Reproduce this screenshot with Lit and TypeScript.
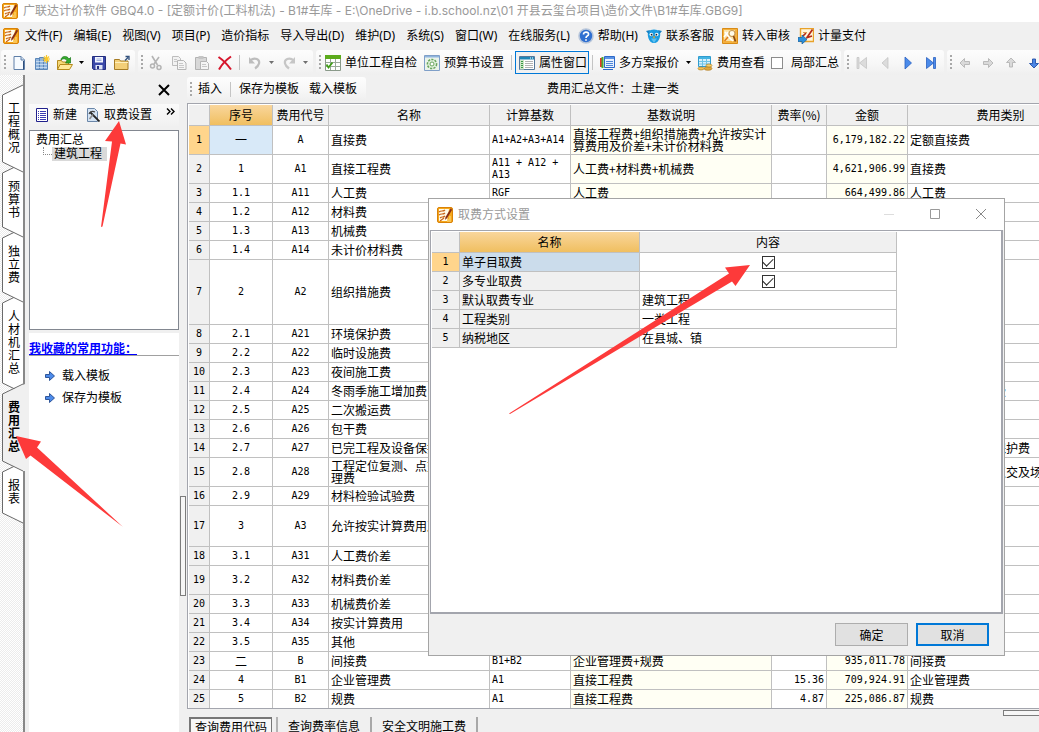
import { LitElement, html, svg, css, nothing } from "lit";
import { customElement, state } from "lit/decorators.js";
import { classMap } from "lit/directives/class-map.js";

const pic = (w: number, h: number, body: unknown) =>
  html`<svg class="ico" width=${w} height=${h} viewBox="0 0 ${w} ${h}" aria-hidden="true">${body}</svg>`;

const icons: Record<string, () => unknown> = {
  app: () => pic(16, 16, svg`
    <rect x=".5" y=".5" width="15" height="15" rx="1.5" fill="#f6a81c" stroke="#d98207"/>
    <path d="M2 2h10l-2 12H2z" fill="#fffbe8"/>
    <path d="M2 5c2-2 4 0 6-2M2 8c2-2 4 0 6-2M3 11c2-2 3 0 5-2M3 14l4-3" stroke="#c8641a" stroke-width="1.2" fill="none"/>
    <path d="M14 1 8.5 10 8 13l2.200-2L15 3z" fill="#8a2f14"/><path d="M11 12v3M13 9v6" stroke="#ffe08a"/>`),
  file: () => pic(16, 16, svg`
    <path d="M3 1.500h7l3.500 3.500v9.500H3z" fill="#f7fbff" stroke="#5f7fa8"/>
    <path d="M10 1.500V5h3.500" fill="#cfdff0" stroke="#5f7fa8"/><path d="M12.500 6v8.500" stroke="#2f4f7c"/>`),
  book: () => pic(16, 16, svg`
    <path d="M1.500 3.500h4v11h-4zM5.500 2.500h4v12h-4zM9.500 3.500h4v11h-4z" fill="#8fb4dd" stroke="#5b86b8"/>
    <path d="M2 6.500h11M2 9.500h11M2 12.500h11" stroke="#e8f1fa" stroke-width=".6"/>
    <path d="M12.500 0v8M8.500 4h8M10 1.500l5 5M15 1.500l-5 5" stroke="#f9c828" stroke-width="1.200"/>`),
  open: () => pic(16, 16, svg`
    <path d="M.5 14.500v-9h4l1 1.500h6v7.500z" fill="#f5d878" stroke="#b58a1d"/>
    <path d="M.5 14.500 3 9.500h12.500l-3 5z" fill="#ffe99a" stroke="#b58a1d"/>
    <path d="M4 5c0-4 6-5 8-1l1.500-1.500V8H8.500L10 6C9 3.500 6.500 3 4 5z" fill="#35ad2e" stroke="#187518" stroke-width=".7"/>`),
  save: () => pic(16, 16, svg`
    <path d="M1.500 1.500h13v13h-12l-1-1z" fill="#3a48a8" stroke="#242f80"/>
    <path d="M4 2h8v5.500H4z" fill="#f4f6ff"/><path d="M4.500 10h7v4.500h-7z" fill="#dfe4f5"/><path d="M6 11h2v3H6z" fill="#242f80"/>
    <path d="M5.500 4h5M5.500 5.500h5" stroke="#9fb0dd"/>`),
  folder: () => pic(16, 16, svg`
    <path d="M.5 14.500V4.500h5l1 1.500h7.500v8.500z" fill="#f3cf78" stroke="#a67c25"/>
    <path d="M1 7.500h13" stroke="#fff0bd"/><path d="M11 5.500 14 2.500M11.500 1.500h3.500v3.500" stroke="#31507c" stroke-width="1.300" fill="none"/>`),
  cut: () => pic(16, 16, svg`
    <path d="M4 1l5.500 9M11 2 6 9" stroke="#b4b4b4" stroke-width="1.600"/>
    <circle cx="4.500" cy="11" r="2" fill="none" stroke="#b4b4b4" stroke-width="1.500"/><circle cx="11" cy="12.500" r="2" fill="none" stroke="#b4b4b4" stroke-width="1.500"/>`),
  copy: () => pic(16, 16, svg`
    <path d="M1.500 1.500h6l2 2v7h-8z" fill="#f2f2f2" stroke="#bdbdbd"/>
    <path d="M6.500 5.500h6l2.500 2.500v6.500H6.500z" fill="#f5f5f5" stroke="#b5b5b5"/><path d="M8 8.500h4M8 10.500h5M8 12.500h5M3 4.500h3M3 6.500h3" stroke="#c8c8c8"/>`),
  paste: () => pic(16, 16, svg`
    <path d="M1.500 2.500h11v12h-11z" fill="#d8d8d8" stroke="#b2b2b2"/><path d="M4.500 1h5v3h-5z" fill="#c4c4c4"/>
    <path d="M6.500 6.500h6l2 2v6h-8z" fill="#f5f5f5" stroke="#b5b5b5"/><path d="M8 9.500h4M8 11.500h5" stroke="#c8c8c8"/>`),
  del: () => pic(16, 16, svg`<path d="M1.500 2C6 5 10 9 14 14.500M14 1.500C9 5 5 9 2 14.500" stroke="#d6152c" stroke-width="2" fill="none"/>`),
  undo: () => pic(16, 16, svg`<path d="M3 5.500c5-4 10-1 9 3-.4 2-2 3.500-4 5" stroke="#bdbdbd" stroke-width="2.200" fill="none"/><path d="M2 2v6.500h6z" fill="#bdbdbd"/>`),
  redo: () => pic(16, 16, svg`<path d="M13 5.500c-5-4-10-1-9 3 .4 2 2 3.500 4 5" stroke="#c6c6c6" stroke-width="2.200" fill="none"/><path d="M14 2v6.500H8z" fill="#c6c6c6"/>`),
  check: () => pic(16, 16, svg`
    <path d="M.5.500h15v15H.5z" fill="#fff" stroke="#8a9a8a"/><path d="M0 0h16v4H0z" fill="#5cab1c"/>
    <path d="M1 7.500h14M1 11.500h14M5.500 4v11M10.500 4v11" stroke="#9aa89a"/><path d="M1.500 9.500l2 3 4-5" stroke="#3f9d16" stroke-width="1.800" fill="none"/>`),
  gear: () => pic(16, 16, svg`
    <path d="M.5.500h15v15H.5z" fill="#eaf3ea" stroke="#7f9fc8"/><path d="M1 1h14v1.500H1z" fill="#90b4de"/>
    <circle cx="8" cy="9" r="4.600" fill="#dff0da" stroke="#68a55c" stroke-width="1.500" stroke-dasharray="2.200 1.200"/><circle cx="8" cy="9" r="2" fill="#fff" stroke="#68a55c"/>`),
  props: () => pic(16, 16, svg`
    <path d="M.5 1.500h15v13H.5z" fill="#fff" stroke="#56789a"/><path d="M1 2h14v2.500H1z" fill="#1e86b8"/><path d="M11 3h1m1 0h1" stroke="#fff"/>
    <path d="M1 5h4v9.500H1z" fill="#cfe6c8"/><path d="M2 6.500h2M2 8.500h2M2 10.500h2M2 12.500h2" stroke="#3c9a48"/>
    <path d="M6 6.500h8M6 8.500h8M6 10.500h8M6 12.500h8" stroke="#b3b3b3"/>`),
  multi: () => pic(16, 16, svg`
    <path d="M1 3h2v9H1z" fill="#e03a28"/><path d="M2.500 2h2v11h-2z" fill="#49a934"/>
    <path d="M5.500 1.500h10v11h-10z" fill="#e8f1ff" stroke="#2d69c9"/><path d="M4 14.500h10" stroke="#2d69c9"/>
    <path d="M6 2h9v2H6z" fill="#5b93e4"/><path d="M7 6.500h7M7 8.500h7M7 10.500h7" stroke="#4f86d8"/>`),
  fee: () => pic(16, 16, svg`
    <path d="M1.500 1.500h12v10h-12z" fill="#d7f0fb" stroke="#2f9ccf"/><path d="M2 2h11v2H2z" fill="#45b4e2"/><path d="M2 6.500h11M2 9h11M5.500 4v7M9.500 4v7" stroke="#6fc3e6" fill="none"/>
    <ellipse cx="11" cy="13.500" rx="4" ry="1.800" fill="#e0a83c" stroke="#a8741a" stroke-width=".6"/><ellipse cx="12" cy="10.500" rx="3" ry="1.500" fill="#f5cf6c" stroke="#a8741a" stroke-width=".6"/><ellipse cx="4" cy="13.500" rx="3" ry="1.500" fill="#f0c25a" stroke="#a8741a" stroke-width=".6"/>`),
  help: () => pic(16, 16, svg`
    <circle cx="8" cy="8" r="7" fill="#2f6fd0" stroke="#b8c6da" stroke-width="1.600"/><path d="M5.500 6.500c0-3.500 5.500-3 5 0-.3 1.500-2.500 1.500-2.500 3.500M8 11.200v1.600" stroke="#fff" stroke-width="1.700" fill="none"/>`),
  qq: () => pic(16, 16, svg`
    <path d="M8 1.500c5 0 7 3 6 7s-2.500 6.500-6 6.500-5-2.500-6-6.500 1-7 6-7z" fill="#1b9be0"/><path d="M0 3l4-1-1.500 4zM16 3l-4-1 1.500 4z" fill="#1580c4"/><path d="M5 10.500h6L8 15z" fill="#5cc0f0"/>
    <circle cx="5.300" cy="6.500" r="1.800" fill="#fff"/><circle cx="10.700" cy="6.500" r="1.800" fill="#fff"/><circle cx="5.600" cy="6.700" r=".9" fill="#123"/><circle cx="10.400" cy="6.700" r=".9" fill="#123"/><path d="M6.500 8.500h3L8 10.500z" fill="#f7a51c"/>`),
  audit: () => pic(16, 16, svg`
    <path d="M.5.500h15v15H.5z" fill="#f4b13e" stroke="#d98b16"/><path d="M2 2h11l-1 11H2z" fill="#fbe3a8"/>
    <path d="M3 4c2 3 4 6 8 9M2 9l4-5" stroke="#fff" stroke-width="1.500" fill="none"/>
    <circle cx="10" cy="5.500" r="3" fill="#fffbe8" stroke="#c89a55" stroke-width="1.200"/><path d="M11.500 8l2 5.500" stroke="#8a4a16" stroke-width="1.800"/><path d="M2.500 13 6 9" stroke="#e07a1c" stroke-width="1.500"/>`),
  pay: () => pic(16, 16, svg`
    <path d="M2.500.500h13v13h-13z" fill="#fff6dd" stroke="#e8a22a" stroke-width="1.400"/><path d="M14.500 1.500 9 9.500M5 8l3-3M8 10l6-2" stroke="#b52a18" stroke-width="1.700"/><path d="M5 4.500h4" stroke="#d99a50"/>
    <path d="M0 9.500h4V7l5 4.500L4 16v-2.500H0z" fill="#2b8fdc" stroke="#125d9c" stroke-width=".7"/>`),
  first: () => pic(16, 16, svg`<path d="M3 2.500h2v11H3zM12.500 2.500v11L5.500 8z" fill="#dcdcdc" stroke="#c0c0c0" stroke-width=".7"/>`),
  prev: () => pic(16, 16, svg`<path d="M11 2.500v11L5 8z" fill="#dcdcdc" stroke="#c0c0c0" stroke-width=".7"/>`),
  next: () => pic(16, 16, svg`<path d="M5 2v12l6.500-6z" fill="#4b8bea" stroke="#2a5fc0" stroke-width=".8"/>`),
  last: () => pic(16, 16, svg`<path d="M3.500 2.500v11L10.500 8zM10.500 2.500h2v11h-2z" fill="#4b8bea" stroke="#2a5fc0" stroke-width=".8"/>`),
  left: () => pic(16, 16, svg`<path d="M3 8l4.500-4.500v3h5v3h-5v3z" fill="#dadada" stroke="#b4b4b4" stroke-width=".9"/>`),
  right: () => pic(16, 16, svg`<path d="M13 8 8.500 3.500v3h-5v3h5v3z" fill="#dadada" stroke="#b4b4b4" stroke-width=".9"/>`),
  up: () => pic(16, 16, svg`<path d="M8 3l4.500 4.500h-3v4.500h-3V7.500h-3z" fill="#dadada" stroke="#b4b4b4" stroke-width=".9"/>`),
  down: () => pic(16, 16, svg`<path d="M8 13 3.500 8.500h3V4h3v4.500h3z" fill="#4b86e4" stroke="#2450a8" stroke-width=".9"/>`),
  go: () => pic(10, 10, svg`<path d="M.5 3.500h4v-3L9.500 5l-5 4.500v-3h-4z" fill="#4d8bea" stroke="#23498f" stroke-width=".9"/>`),
  list: () => pic(14, 14, svg`<path d="M1.500.500h11v13h-11z" fill="#fff" stroke="#20208c"/><path d="M3 3.500h1m1 0h6M3 5.500h1m1 0h6M3 7.500h1m1 0h6M3 9.500h1m1 0h6M3 11.500h1m1 0h6" stroke="#3a3ab4"/>`),
  wand: () => pic(14, 14, svg`<path d="M1.500.500h7l3 3v10h-10z" fill="#d5e4f4" stroke="#6a86a8"/><path d="M4 4l9.500 9.500" stroke="#222" stroke-width="1.800"/><path d="M7 6.500 3.500 11" stroke="#8a8a8a" stroke-width="1.500"/><path d="M3 6c1-3 4-3 6-2" stroke="#444" stroke-width="1.200" fill="none"/>`),
  caret: () => pic(5, 3, svg`<path d="M0 0h5L2.500 3z" fill="currentColor"/>`),
};

interface Row { h: string; no: string; code: string; name: string; base?: string; note?: string; rate?: string; sum?: string; kind?: string; }
const r = (no: string, code: string, name: string, rest: Partial<Row> = {}): Row => ({ h: "h1", no, code, name, ...rest });

const ROWS: Row[] = [
  r("一", "A", "直接费", { h: "h2", base: "A1+A2+A3+A14", note: "直接工程费+组织措施费+允许按实计算费用及价差+未计价材料费", sum: "6,179,182.22", kind: "定额直接费" }),
  r("1", "A1", "直接工程费", { h: "h2", base: "A11 + A12 + A13", note: "人工费+材料费+机械费", sum: "4,621,906.99", kind: "直接费" }),
  r("1.1", "A11", "人工费", { base: "RGF", note: "人工费", sum: "664,499.86", kind: "人工费" }),
  r("1.2", "A12", "材料费"),
  r("1.3", "A13", "机械费"),
  r("1.4", "A14", "未计价材料费"),
  r("2", "A2", "组织措施费", { h: "h5" }),
  r("2.1", "A21", "环境保护费"),
  r("2.2", "A22", "临时设施费"),
  r("2.3", "A23", "夜间施工费"),
  r("2.4", "A24", "冬雨季施工增加费", { kind: "冬雨季施工增加费" }),
  r("2.5", "A25", "二次搬运费"),
  r("2.6", "A26", "包干费"),
  r("2.7", "A27", "已完工程及设备保护费", { kind: "已完工程及设备保护费" }),
  r("2.8", "A28", "工程定位复测、点交及场地清理费", { h: "h2", kind: "工程定位复测、点交及场地清理费" }),
  r("2.9", "A29", "材料检验试验费"),
  r("3", "A3", "允许按实计算费用及价差", { h: "h3" }),
  r("3.1", "A31", "人工费价差"),
  r("3.2", "A32", "材料费价差", { h: "h2" }),
  r("3.3", "A33", "机械费价差"),
  r("3.4", "A34", "按实计算费用"),
  r("3.5", "A35", "其他"),
  r("二", "B", "间接费", { base: "B1+B2", note: "企业管理费+规费", sum: "935,011.78", kind: "间接费" }),
  r("4", "B1", "企业管理费", { base: "A1", note: "直接工程费", rate: "15.36", sum: "709,924.91", kind: "企业管理费" }),
  r("5", "B2", "规费", { h: "h0", base: "A1", note: "直接工程费", rate: "4.87", sum: "225,086.87", kind: "规费" }),
];

const SIDE = ["工程概况", "预算书", "独立费", "人材机汇总", "费用汇总", "报表"];
const MENU: [string, string?][] = [
  ["文件(F)"], ["编辑(E)"], ["视图(V)"], ["项目(P)"], ["造价指标"], ["导入导出(D)"], ["维护(D)"], ["系统(S)"], ["窗口(W)"], ["在线服务(L)"],
  ["帮助(H)", "help"], ["联系客服", "qq"], ["转入审核", "audit"], ["计量支付", "pay"],
];

@customElement("app-root")
export class AppRoot extends LitElement {
  @state() private side = 4;
  @state() private perItem = true;
  @state() private perMajor = true;

  static styles = css`
    :host { display: block; position: relative; height: 100vh; overflow: hidden; background: #f0f0f0; color: #000;
      font: 12px/16px "Noto Sans", "Noto Sans CJK SC", sans-serif; }
    * { box-sizing: border-box; }
    button { font: inherit; color: inherit; background: none; border: 0; padding: 0; margin: 0; white-space: nowrap; }
    a { color: inherit; text-decoration: none; }
    .ico { display: block; flex: none; }
    .page { display: flex; flex-direction: column; height: 100%; }
    .title { display: flex; align-items: center; gap: 5px; height: 22px; padding: 0 2px; background: #fff; color: #999; white-space: nowrap; flex: none;
      font-family: Inter, "Noto Sans CJK SC", sans-serif; }
    .menu { display: flex; align-items: center; gap: 11px; height: 28px; padding: 0 3px; flex: none; }
    .menu button { display: flex; align-items: center; gap: 4px; }
    .menu .pic { margin-left: -3px; }
    .menu .lead { margin-right: -5px; }

    .bars { display: flex; gap: 3px; height: 25px; padding-left: 1px; flex: none; }
    .band { display: flex; align-items: center; border-radius: 3px; background: linear-gradient(#fdfdfd, #f6f6f6 60%, #efefef); flex: none; padding-right: 2px; }
    .grip { width: 2px; height: 15px; margin: 0 1px 0 3px; background: repeating-linear-gradient(#a8a8a8 0 2px, transparent 2px 4px); flex: none; }
    .tb { display: flex; align-items: center; justify-content: center; width: 23px; height: 22px; }
    .dd { display: flex; align-items: center; justify-content: center; width: 11px; height: 22px; }
    .dim { color: #707070; }
    .tx { display: flex; align-items: center; gap: 4px; height: 23px; padding: 0 4px 0 3px; }
    .tx.on { border: 1px solid #0078d7; background: #f1f1f1; padding: 0 1px 0 3px; }
    .sep { width: 1px; height: 15px; margin: 0 3px; background: #c4c4c4; flex: none; }
    .opt { display: flex; align-items: center; gap: 8px; padding: 0 0 0 2px; }
    .box { appearance: none; width: 13px; height: 13px; margin: 0; border: 1px solid #333; background: #fff; display: grid; place-items: center; flex: none; }
    .box.soft { width: 12px; height: 12px; border-color: #8c8c8c; }
    .box:checked::before { content: ""; width: 9px; height: 5px; border: solid #222; border-width: 0 0 1px 1px; transform: rotate(-45deg); position: relative; top: -1px; }

    .main { display: flex; flex: 1; min-height: 0; }
    .side { width: 25px; padding-top: 10px; flex: none; border-right: 2px solid #888; display: flex; flex-direction: column; align-items: flex-start;
      background: repeating-conic-gradient(#fff 0 25%, #ececec 0 50%) 0 0 / 2px 2px; }
    .tab { position: relative; width: 25px; padding: 17px 0 9px 8px; line-height: 13px; white-space: normal; text-align: left; }
    .tab span { position: relative; display: block; width: 12px; }
    .tab svg { position: absolute; left: 0; top: 0; overflow: visible; }
    .tab.cur { font-weight: 700; }

    .dock { width: 155px; padding: 0 0 0 4px; display: flex; flex-direction: column; flex: none; }
    .dockhead { display: grid; grid-template-columns: 1fr 32px; align-items: center; height: 29px; text-align: center; }
    .dockhead span { padding-left: 6px; }
    .dockhead button { display: grid; place-items: center; height: 20px; }
    .docktools { display: flex; align-items: center; height: 22px; width: 150px; padding: 0 2px; background: linear-gradient(#fafafa, #f1f1f1); }
    .docktools .tx { padding: 0 5px 0 4px; }
    .docktools .more { margin-left: auto; align-self: flex-start; padding: 4px 2px 0 0; }
    .tree { width: 150px; height: 200px; margin: 4px 0 3px; padding: 2px 6px; border: 1px solid #828790; background: #fff; line-height: 14px; flex: none; }
    .kid { display: flex; }
    .kid i { width: 9px; height: 8px; margin: 0 0 0 7px; border: dotted #888; border-width: 0 0 1px 1px; }
    .kid span { background: #d9d9d9; padding: 0 5px 0 2px; }
    .fav { width: 150px; flex: 1; background: #fff; padding-top: 8px; }
    .favhead { border-bottom: 1px solid #a0a0a0; height: 15px; line-height: 16px; font-weight: 700; color: #00f; white-space: nowrap; }
    .favhead a { text-decoration: underline; }
    .fav button { display: flex; align-items: center; gap: 7px; height: 22px; padding-left: 16px; }
    .favlist { padding-top: 9px; }

    .split { width: 7px; flex: none; padding-top: 421px; }
    .bar { width: 6px; height: 100px; border: 1px solid #7c7c7c; background: #f6f6f6; }
    .work { flex: 1; min-width: 0; display: flex; flex-direction: column; }
    .worktop { display: grid; grid-template-columns: 1fr auto 1fr; align-items: center; height: 28px; flex: none; }
    .worktop .band { height: 24px; justify-self: start; padding-right: 4px; }
    .worktop .tx { padding: 0 5px; }
    .grid { border: 1px solid #a3a5ad; border-right: 0; padding: 1px 0 0 1px; background: #fff; overflow: hidden; flex: none; }

    table { border-collapse: separate; border-spacing: 0; table-layout: fixed; line-height: 12px; font-family: "Noto Sans CJK SC", sans-serif; }
    .sheet { width: 905px; }
    th, td { border: solid #c0c0c0; border-width: 0 1px 1px 0; padding: 0 2px; font-weight: 400; text-align: left; overflow: hidden; word-break: break-all; }
    th { background: #f0f0f0; text-align: center; padding: 0; height: 21px; }
    .hot { background: linear-gradient(#f9d69c, #f0bf60); }
    tbody th { height: auto; }
    tbody th.pick { background: #ffd58c; }
    .h0 { height: 18px; } .h1 { height: 19px; } .h2 { height: 29px; } .h3 { height: 41px; } .h5 { height: 65px; }
    .c { text-align: center; } .e { text-align: right; }
    .m { font-family: "DejaVu Sans Mono", monospace; font-size: 10px; word-break: normal; }
    .pale { background: #fffff4; }
    td.sel { background: #d8e9f8; }
    .h0 td, .h0 th { border-bottom: 0; }
    .w0 { width: 21px; } .w1 { width: 63px; } .w2 { width: 56px; } .w3 { width: 161px; } .w4 { width: 81px; }
    .w5 { width: 201px; } .w6 { width: 55px; } .w8 { width: 186px; }

    .foot { display: flex; justify-content: space-between; align-items: flex-start; overflow: hidden; }
    .pages { display: flex; margin: 8px 0 0 2px; }
    .pages button { height: 20px; padding: 0 10px; border-right: 2px solid #a8a8a8; }
    .pages .cur { border: solid #777; border-width: 2px 1px 0 2px; background: #f7f7f7; padding: 0 4px; margin-right: 4px; }
    .pages .pre { width: 2px; height: 20px; background: #b4b4b4; }
    .hbar { width: 36px; height: 6px; margin-top: 1px; border: 1px solid #7c7c7c; border-right: 0; background: #f6f6f6; }

    .dialog { position: absolute; z-index: 30; left: 428px; top: 198px; width: 577px; height: 458px; display: flex; flex-direction: column;
      border: 1px solid #a4a4a4; background: #f0f0f0; }
    .dtitle { display: flex; align-items: center; height: 31px; flex: none; background: #fff; color: #999; padding-left: 8px; gap: 5px; }
    .dtitle .wins { display: flex; margin-left: auto; }
    .wins button { width: 46px; height: 24px; padding-bottom: 2px; display: grid; place-items: center; }
    .dbody { flex: 1; margin: 0 1px; background: #fff; border: solid #a3a5ad; border-width: 1px 2px 2px 1px; padding: 1px; }
    .dbody table { width: 465px; }
    .x0 { width: 28px; } .x1 { width: 180px; } .x2 { width: 257px; }
    .grey { background: #f0f0f0; }
    td.mark { background: #cbdceb; }
    .tick { display: grid; place-items: center; }
    .acts { display: flex; justify-content: flex-end; gap: 8px; padding: 9px 15px 9px 0; flex: none; }
    .acts button { width: 73px; height: 23px; border: 1px solid #adadad; background: #e1e1e1; font-family: "Noto Sans CJK SC", sans-serif; }
    .acts .def { border: 2px solid #0078d7; }
    .marks { position: absolute; z-index: 40; left: 0; top: 0; pointer-events: none; }
  `;

  private tool(name: string, label: string) {
    return html`<button class="tb" aria-label=${label}>${icons[name]()}</button>`;
  }
  private drop(dim = false) {
    return html`<button class=${classMap({ dd: true, dim })} aria-label="展开">${icons.caret()}</button>`;
  }
  private text(label: string, icon = "", on = false) {
    return html`<button class=${classMap({ tx: true, on })}>${icon ? icons[icon]() : nothing}<span>${label}</span></button>`;
  }
  private cell(v: string | undefined, cls: string) {
    const mono = v && /^[\x20-\x7e]+$/.test(v) ? " m" : "";
    return html`<td class="${cls}${mono}">${v ?? ""}</td>`;
  }

  private sideTab(label: string, i: number) {
    const h = label.length * 13 + 26;
    const cur = i === this.side;
    return html`<button class=${classMap({ tab: true, cur })} style="z-index:${cur ? 20 : 10 - i}" @click=${() => (this.side = i)}>
      <svg width="25" height=${h} aria-hidden="true">
        <path d="M${cur ? 25 : 23} 0L2.500 10V${h - 1}L23 ${h + 9}${cur ? "H25" : ""}" fill=${cur ? "#f0f0f0" : "#fff"} stroke="none"/>
        <path d="M23 0L2.500 10V${h - 1}L23 ${h + 9}" fill="none" stroke="#6a6a6a"/>
      </svg><span>${label}</span></button>`;
  }

  render() {
    return html`
      <div class="page">
        <header class="title">${icons.app()}<span>广联达计价软件 GBQ4.0 - [定额计价(工料机法) - B1#车库 - E:\\OneDrive - i.b.school.nz\\01 开县云玺台项目\\造价文件\\B1#车库.GBG9]</span></header>
        <nav class="menu"><span class="lead">${icons.app()}</span>
          ${MENU.map(([t, ic]) => html`<button class=${classMap({ pic: !!ic })}>${ic ? icons[ic]() : nothing}<span>${t}</span></button>`)}
        </nav>
        <div class="bars">
          <div class="band"><span class="grip"></span>${this.tool("file", "新建")}${this.tool("book", "新建项目")}${this.tool("open", "打开")}${this.drop()}${this.tool("save", "保存")}${this.tool("folder", "关闭")}</div>
          <div class="band"><span class="grip"></span>${this.tool("cut", "剪切")}${this.tool("copy", "复制")}${this.tool("paste", "粘贴")}${this.tool("del", "删除")}<span class="sep"></span>${this.tool("undo", "撤销")}${this.drop(true)}${this.tool("redo", "恢复")}${this.drop(true)}</div>
          <div class="band"><span class="grip"></span>${this.text("单位工程自检", "check")}${this.text("预算书设置", "gear")}<span class="sep"></span>${this.text("属性窗口", "props", true)}<span class="sep"></span>${this.text("多方案报价", "multi")}${this.drop()}${this.text("费用查看", "fee")}
            <label class="opt"><input class="box soft" type="checkbox">局部汇总</label></div>
          <div class="band"><span class="grip"></span>${this.tool("first", "首个")}${this.tool("prev", "上一个")}${this.tool("next", "下一个")}${this.tool("last", "末个")}</div>
          <div class="band"><span class="grip"></span>${this.tool("left", "左移")}${this.tool("right", "右移")}${this.tool("up", "上移")}${this.tool("down", "下移")}</div>
        </div>
        <div class="main">
          <nav class="side">${SIDE.map((s, i) => this.sideTab(s, i))}</nav>
          <aside class="dock">
            <div class="dockhead"><span>费用汇总</span><button aria-label="关闭面板">${pic(12, 12, svg`<path d="M1 1l10 10M11 1 1 11" stroke="#000" stroke-width="2"/>`)}</button></div>
            <div class="docktools">${this.text("新建", "list")}${this.text("取费设置", "wand")}<button class="more" aria-label="更多">${pic(9, 7, svg`<path d="M1 .5l3 3-3 3M5 .5l3 3-3 3" stroke="#000" stroke-width="1.400" fill="none"/>`)}</button></div>
            <div class="tree"><div>费用汇总</div><div class="kid"><i></i><span>建筑工程</span></div></div>
            <section class="fav">
              <div class="favhead"><a href="#">我收藏的常用功能：</a></div>
              <div class="favlist"><button>${icons.go()}载入模板</button><button>${icons.go()}保存为模板</button></div>
            </section>
          </aside>
          <div class="split"><div class="bar"></div></div>
          <main class="work">
            <div class="worktop">
              <div class="band"><span class="grip"></span>${this.text("插入")}<span class="sep"></span>${this.text("保存为模板")}${this.text("载入模板")}</div>
              <span>费用汇总文件：土建一类</span>
            </div>
            <div class="grid">
              <table class="sheet">
                <thead><tr><th class="w0"></th><th class="w1 hot">序号</th><th class="w2">费用代号</th><th class="w3">名称</th><th class="w4">计算基数</th><th class="w5">基数说明</th><th class="w6">费率(%)</th><th class="w4">金额</th><th class="w8">费用类别</th></tr></thead>
                <tbody>${ROWS.map((x, i) => html`<tr class=${x.h}>
                  <th class="m ${i === 0 ? "pick" : ""}">${i + 1}</th>
                  ${this.cell(x.no, i === 0 ? "c sel" : "c")}${this.cell(x.code, "c")}${this.cell(x.name, "")}${this.cell(x.base, "")}${this.cell(x.note, "pale")}${this.cell(x.rate, "e")}${this.cell(x.sum, "e pale")}${this.cell(x.kind, "")}
                </tr>`)}</tbody>
              </table>
            </div>
            <div class="foot">
              <div class="pages"><button class="cur">查询费用代码</button><span class="pre"></span><button>查询费率信息</button><button>安全文明施工费</button></div>
              <div class="hbar"></div>
            </div>
          </main>
        </div>
      </div>
      <section class="dialog" role="dialog" aria-label="取费方式设置">
        <div class="dtitle">${icons.app()}<span>取费方式设置</span>
          <div class="wins">
            <button aria-label="最小化">${pic(10, 10, svg`<path d="M0 5.500h10" stroke="#ddd"/>`)}</button>
            <button aria-label="最大化">${pic(10, 10, svg`<path d="M.5.500h9v9h-9z" fill="none" stroke="#999"/>`)}</button>
            <button aria-label="关闭">${pic(10, 10, svg`<path d="M0 0l10 10M10 0 0 10" stroke="#888"/>`)}</button>
          </div>
        </div>
        <div class="dbody">
          <table>
            <thead><tr><th class="x0"></th><th class="x1 hot">名称</th><th class="x2">内容</th></tr></thead>
            <tbody>
              <tr class="h1"><th class="m pick">1</th><td class="mark"><label for="a">单子目取费</label></td><td><div class="tick"><input id="a" class="box" type="checkbox" .checked=${this.perItem} @change=${() => (this.perItem = !this.perItem)}></div></td></tr>
              <tr class="h1"><th class="m">2</th><td class="grey"><label for="b">多专业取费</label></td><td><div class="tick"><input id="b" class="box" type="checkbox" .checked=${this.perMajor} @change=${() => (this.perMajor = !this.perMajor)}></div></td></tr>
              <tr class="h1"><th class="m">3</th><td class="grey">默认取费专业</td><td>建筑工程</td></tr>
              <tr class="h1"><th class="m">4</th><td class="grey">工程类别</td><td>一类工程</td></tr>
              <tr class="h1"><th class="m">5</th><td class="grey">纳税地区</td><td>在县城、镇</td></tr>
            </tbody>
          </table>
        </div>
        <div class="acts"><button>确定</button><button class="def">取消</button></div>
      </section>
      <svg class="marks" width="1039" height="732" viewBox="0 0 1039 732" fill="#fd3a3a" aria-hidden="true">
        <path d="M119 121 105 141l7 0.500L101 227l1.500-.5L120.500 143.500l5.500 1z"/>
        <path d="M16 436 41 441.500 37 447.500 123 527 30.500 455.500 26 459z"/>
        <path d="M750 265 725 267.500l4 6L509 413.500l1 .5 222-132.500 3.500 4.500z"/>
      </svg>`;
  }
}
